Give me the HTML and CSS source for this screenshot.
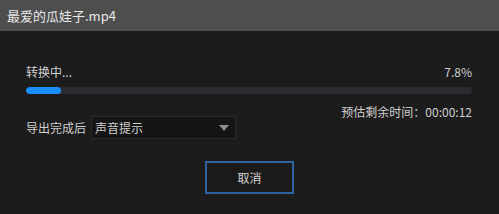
FILE: index.html
```html
<!DOCTYPE html>
<html lang="zh">
<head>
<meta charset="utf-8">
<title>转换</title>
<link rel="stylesheet" href="styles.css">
</head>
<body>
<div class="dialog">
  <div class="titlebar">最爱的瓜娃子.mp4</div>
  <div class="content">
    <div class="status-row">
      <span>转换中...</span>
      <span>7.8%</span>
    </div>
    <div class="progress"><div class="progress-fill" style="width:7.8%"></div></div>
    <div class="eta">预估剩余时间：00:00:12</div>
    <div class="export-row">
      <span class="label">导出完成后</span>
      <div class="select">
        <span>声音提示</span>
        <span class="arrow"></span>
      </div>
    </div>
  </div>
  <div class="actions">
    <button class="btn">取消</button>
  </div>
</div>
</body>
</html>
```

FILE: styles.css
```css
html, body {
  margin: 0;
  padding: 0;
  background: #1c1c1c;
}
body {
  width: 499px;
  height: 214px;
  overflow: hidden;
  font-family: "Noto Sans CJK SC", "Noto Sans", sans-serif;
  font-size: 12px;
  color: #cfcfcf;
}
.dialog {
  display: flex;
  flex-direction: column;
}
.titlebar {
  height: 31px;
  line-height: 31px;
  padding-left: 7px;
  background: #4e4e4e;
  color: #e8e8e8;
  font-size: 13px;
}
.content {
  padding: 0 27px 0 26px;
  display: flex;
  flex-direction: column;
}
.status-row {
  margin-top: 32px;
  height: 18px;
  line-height: 18px;
  display: flex;
  justify-content: space-between;
}
.progress {
  margin-top: 6px;
  height: 7px;
  background: #2a2c31;
  border-radius: 4px;
  overflow: hidden;
}
.progress-fill {
  height: 100%;
  background: #1a8dff;
  border-radius: 4px;
}
.eta {
  margin-top: 12px;
  height: 12px;
  line-height: 12px;
  text-align: right;
}
.export-row {
  margin-top: -2px;
  display: flex;
  align-items: center;
  gap: 5px;
}
.select {
  height: 21px;
  border: 1px solid #2a2a2a;
  background: #151515;
  display: flex;
  align-items: center;
  justify-content: space-between;
  padding: 0 6px 0 3px;
  box-sizing: content-box;
  width: 134px;
}
.arrow {
  width: 0;
  height: 0;
  border-left: 5px solid transparent;
  border-right: 5px solid transparent;
  border-top: 6px solid #8c8c8c;
}
.actions {
  display: flex;
  justify-content: center;
  margin-top: 22px;
}
.btn {
  width: 89px;
  height: 33px;
  background: #1a1a1a;
  border: 2px solid #2c64a0;
  color: #d4d4d4;
  font-family: "Noto Sans CJK SC", "Noto Sans", sans-serif;
  font-size: 12px;
  padding: 0;
}
```
